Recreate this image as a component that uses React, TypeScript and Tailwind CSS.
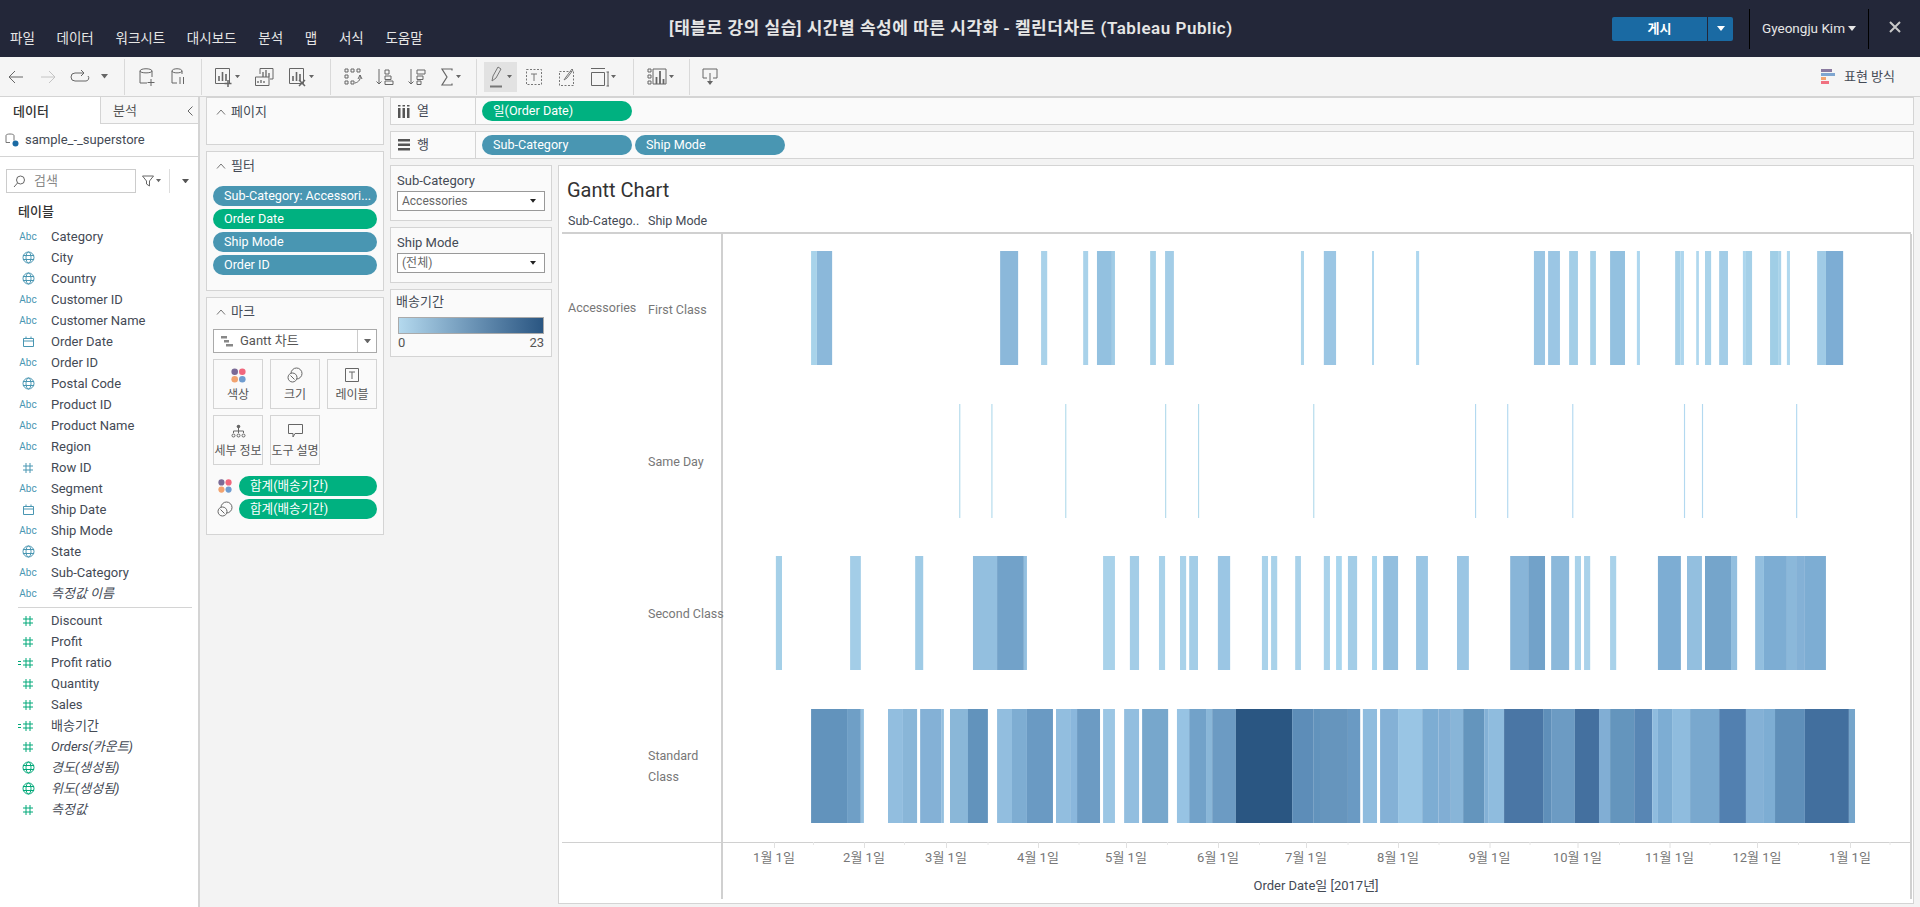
import type { ReactNode } from "react";

type Seg = [number, number, string];

// bar edges were read off crops starting at x=720 and x=1320, at 2.613 crop px per px
const PLOT_LEFT = 723;
const SCALE = 2.613;
const toX = (crop: number, v: number) => crop + v / SCALE - PLOT_LEFT;

const firstClass: [number, Seg[]][] = [
  [720, [
    [238, 253, "#a8d3ea"], [253, 293, "#8bb8da"], [732, 779, "#8bb8da"], [839, 855, "#a9d2ea"],
    [949, 962, "#a9d2ea"], [985, 1024, "#93c1e0"], [1024, 1032, "#a0cce6"], [1124, 1139, "#a5d0e8"],
    [1163, 1186, "#a3cde7"], [1518, 1526, "#aed6ec"],
  ]],
  [1320, [
    [10, 42, "#9bc6e4"], [136, 141, "#aed7ef"], [251, 259, "#aed7ef"], [559, 588, "#9bc6e4"],
    [596, 627, "#9bc6e4"], [651, 674, "#a3cee7"], [706, 721, "#a5d0e8"], [758, 797, "#93c1e0"],
    [828, 836, "#aed7ef"], [928, 942, "#a5d0e8"], [942, 951, "#add6ee"], [983, 990, "#b0d8ee"],
    [1006, 1022, "#a9d3ea"], [1043, 1066, "#a3cde7"], [1105, 1113, "#add6ee"], [1113, 1129, "#a5d0e8"],
    [1176, 1197, "#a0cee6"], [1197, 1205, "#a9d3ea"], [1220, 1228, "#b0d8ee"], [1299, 1322, "#a0cbe6"],
    [1322, 1367, "#7dadd4"],
  ]],
];

const sameDay: [number, Seg[]][] = [
  [720, [626, 710, 903, 1164, 1250, 1551].map((v): Seg => [v - 1, v + 2, "#b3dbec"])],
  [1320, [406, 490, 660, 952, 999, 1245].map((v): Seg => [v - 1, v + 2, "#b3d9f0"])],
];

const secondClass: [number, Seg[]][] = [
  [720, [
    [146, 162, "#a5d0e8"], [340, 368, "#a3cde7"], [510, 531, "#9fcbe6"], [661, 724, "#93bfdf"],
    [724, 794, "#72a2c9"], [794, 802, "#93bfdf"], [1001, 1032, "#a9d2ea"], [1071, 1095, "#a3cde7"],
    [1147, 1163, "#a9d2ea"], [1202, 1218, "#a9d2ea"], [1226, 1249, "#a3cde7"], [1301, 1333, "#9bc6e4"],
    [1416, 1432, "#a9d2ea"], [1440, 1456, "#a9d2ea"], [1503, 1518, "#a9d2ea"],
  ]],
  [1320, [
    [10, 26, "#a9d2ea"], [42, 57, "#a9d6ee"], [73, 97, "#a3cde7"], [136, 149, "#a9d6ee"],
    [165, 204, "#93bfdf"], [251, 282, "#9bc6e4"], [358, 389, "#9bc6e4"], [497, 544, "#88b5d8"],
    [544, 588, "#72a2c9"], [604, 651, "#8bb8da"], [666, 682, "#a9d2ea"], [690, 706, "#a9d2ea"],
    [758, 774, "#a9d2ea"], [883, 943, "#7dadd3"], [959, 998, "#93bfdf"], [1006, 1074, "#75a5cb"],
    [1074, 1090, "#93bfdf"], [1137, 1160, "#93bfdf"], [1160, 1220, "#7dadd3"], [1220, 1244, "#8bb8da"],
    [1244, 1267, "#84b1d6"], [1267, 1322, "#7dadd3"],
  ]],
];

const standardClass: [number, Seg[]][] = [
  [720, [
    [238, 332, "#6293bc"], [332, 368, "#6f9fc6"], [368, 376, "#93bfdf"], [439, 478, "#92bedf"],
    [478, 515, "#89b6d8"], [523, 578, "#84b1d6"], [578, 585, "#93bfdf"], [601, 648, "#8ab7d8"],
    [648, 700, "#6293bc"], [724, 763, "#92bedf"], [763, 802, "#7eadd2"], [802, 870, "#6a9ac3"],
    [878, 917, "#92bedf"], [917, 933, "#8ab7dc"], [933, 993, "#6c9bc3"], [1001, 1032, "#9bc6e4"],
    [1056, 1095, "#92bedf"], [1103, 1171, "#77a7cc"], [1194, 1226, "#97c3e3"], [1226, 1270, "#72a2c9"],
    [1270, 1286, "#8ab7d8"], [1286, 1348, "#6c9bc3"], [1348, 1495, "#2a5682"], [1495, 1550, "#5d8db8"],
    [1550, 1568, "#6293bc"],
  ]],
  [1320, [
    [0, 73, "#6695bd"], [73, 105, "#6a9ac3"], [112, 149, "#8fbcde"], [157, 204, "#84b1d6"],
    [204, 267, "#99c5e4"], [267, 310, "#7dadd3"], [310, 342, "#81aed4"], [342, 374, "#88b5d8"],
    [374, 429, "#6495bd"], [429, 441, "#84b1d6"], [441, 481, "#8fbcde"], [481, 583, "#4a76a5"],
    [583, 604, "#5f8fb9"], [604, 666, "#6c9bc3"], [666, 729, "#44709f"], [729, 758, "#81aed4"],
    [758, 821, "#6495bd"], [821, 868, "#5886b4"], [868, 883, "#8fbcde"], [883, 920, "#7dadd3"],
    [920, 967, "#8fbcde"], [967, 1043, "#79a8ce"], [1043, 1113, "#5280b0"], [1113, 1160, "#84b1d6"],
    [1160, 1189, "#7dadd3"], [1189, 1267, "#5f8fb9"], [1267, 1382, "#426f9e"], [1382, 1398, "#75a5cb"],
  ]],
];

const plotRows = [
  { top: 17, data: firstClass },
  { top: 170, data: sameDay },
  { top: 322, data: secondClass },
  { top: 475, data: standardClass },
];

const months = [
  [774, "1월 1일"], [864, "2월 1일"], [946, "3월 1일"], [1038, "4월 1일"], [1126, "5월 1일"],
  [1218, "6월 1일"], [1306, "7월 1일"], [1398, "8월 1일"], [1489.5, "9월 1일"], [1577.5, "10월 1일"],
  [1669.5, "11월 1일"], [1757, "12월 1일"], [1850, "1월 1일"],
] as [number, string][];

const minorTicks = [813, 904, 987.5, 1078.5, 1167, 1259, 1347.5, 1438.5, 1529.5, 1619, 1709.5, 1798, 1889.5];

type FieldKind = "abc" | "date" | "geo" | "num" | "numCalc" | "geoM";

const dimensions: [FieldKind, string, boolean?][] = [
  ["abc", "Category"], ["geo", "City"], ["geo", "Country"], ["abc", "Customer ID"], ["abc", "Customer Name"],
  ["date", "Order Date"], ["abc", "Order ID"], ["geo", "Postal Code"], ["abc", "Product ID"], ["abc", "Product Name"],
  ["abc", "Region"], ["num", "Row ID"], ["abc", "Segment"], ["date", "Ship Date"], ["abc", "Ship Mode"],
  ["geo", "State"], ["abc", "Sub-Category"], ["abc", "측정값 이름", true],
];

const measures: [FieldKind, string, boolean?][] = [
  ["numCalc", "Discount"], ["numCalc", "Profit"], ["numCalc", "Profit ratio"], ["numCalc", "Quantity"], ["numCalc", "Sales"],
  ["numCalc", "배송기간"], ["numCalc", "Orders(카운트)", true], ["geoM", "경도(생성됨)", true], ["geoM", "위도(생성됨)", true], ["numCalc", "측정값", true],
];

function Globe({ color }: { color: string }) {
  return (
    <svg width="13" height="13" viewBox="0 0 13 13" fill="none" stroke={color} strokeWidth="1">
      <circle cx="6.5" cy="6.5" r="5.5" />
      <ellipse cx="6.5" cy="6.5" rx="2.5" ry="5.5" />
      <path d="M1 4.5h11M1 8.5h11" />
    </svg>
  );
}

function Hash({ color }: { color: string }) {
  return (
    <svg width="12" height="12" viewBox="0 0 12 12" fill="none" stroke={color} strokeWidth="1">
      <path d="M4 1v10M8 1v10M1 4h10M1 8h10" />
    </svg>
  );
}

function FieldIcon({ kind, index }: { kind: FieldKind; index: number }) {
  if (kind === "abc") return <span className="text-[10px] leading-none text-[#4996b2]">Abc</span>;
  if (kind === "geo") return <Globe color="#4996b2" />;
  if (kind === "geoM") return <Globe color="#00a878" />;
  if (kind === "date") {
    return (
      <svg width="11" height="11" viewBox="0 0 11 11" fill="none" stroke="#4996b2" strokeWidth="1">
        <path d="M.5 2.5h10v8H.5zM.5 5h10M3 .5v2M8 .5v2" />
      </svg>
    );
  }
  if (kind === "num") return <Hash color="#4996b2" />;
  return (
    <span className="relative flex">
      {(index === 2 || index === 5) && <span className="absolute right-[13px] top-1 h-1 w-[3px] border-y border-[#00a878]" />}
      <Hash color="#00a878" />
    </span>
  );
}

function FieldRow({ kind, name, italic, index }: { kind: FieldKind; name: string; italic?: boolean; index: number }) {
  return (
    <div className="flex h-[21px] items-center">
      <span className="flex w-[51px] shrink-0 justify-center pl-[5px]">
        <FieldIcon kind={kind} index={index} />
      </span>
      <span className={`text-[13px] text-[#444a55] ${italic ? "italic" : ""}`}>{name}</span>
    </div>
  );
}

function Caret({ color = "#666", size = 8 }: { color?: string; size?: number }) {
  return (
    <svg width={size} height={(size * 5) / 8} viewBox="0 0 8 5" fill={color}>
      <path d="M0 0h8L4 5z" />
    </svg>
  );
}

function Pill({ green, children, className = "" }: { green?: boolean; children: ReactNode; className?: string }) {
  return (
    <div className={`flex h-5 items-center rounded-[10px] pl-[11px] text-[12.6px] text-white whitespace-nowrap overflow-hidden ${green ? "bg-[#00b180]" : "bg-[#4996b2]"} ${className}`}>
      {children}
    </div>
  );
}

function CardTitle({ children }: { children: ReactNode }) {
  return (
    <div className="flex items-center gap-[5px] pl-[9px] text-[13px] leading-5 text-[#444a55]">
      <svg width="10" height="6" viewBox="0 0 10 6" fill="none" stroke="#777" strokeWidth="1">
        <path d="M1 5.5L5 1l4 4.5" />
      </svg>
      {children}
    </div>
  );
}

function Dots({ size = 15 }: { size?: number }) {
  return (
    <svg width={size} height={size} viewBox="0 0 15 15">
      <circle cx="3.7" cy="3.7" r="3.3" fill="#7a6a96" />
      <circle cx="11.3" cy="3.7" r="3.3" fill="#f0667c" />
      <circle cx="3.7" cy="11.3" r="3.3" fill="#f2a36f" />
      <circle cx="11.3" cy="11.3" r="3.3" fill="#6f9ccf" />
    </svg>
  );
}

function SizeIcon() {
  return (
    <svg width="16" height="16" viewBox="0 0 16 16" fill="none" stroke="#666" strokeWidth="1">
      <circle cx="9.5" cy="6.5" r="5.5" />
      <circle cx="5.5" cy="10.5" r="4.5" fill="#fafafa" />
      <path d="M3.5 8.5l4 4" />
    </svg>
  );
}

function MarkButton({ icon, label }: { icon: ReactNode; label: string }) {
  return (
    <div className="flex h-[50px] w-[50px] flex-col items-center border border-[#d4d4d4] pt-[7px] text-[12px] whitespace-nowrap text-[#555]">
      <span className="flex h-[16px] items-center">{icon}</span>
      <span className="mt-[2px] leading-5">{label}</span>
    </div>
  );
}

function FilterCard({ title, value }: { title: string; value: string }) {
  return (
    <div className="h-[56px] border border-[#d4d4d4] bg-[#fafafa] px-[6px] pt-[5px]">
      <div className="text-[13px] leading-[19px] text-[#444a55]">{title}</div>
      <div className="mt-[1px] flex h-[20px] items-center justify-between border border-[#999] bg-white pl-1 pr-[8px] text-[12px] text-[#666]">
        {value}
        <Caret color="#222" size={6} />
      </div>
    </div>
  );
}

function Shelf({ icon, label, children }: { icon: ReactNode; label: string; children: ReactNode }) {
  return (
    <div className="flex h-[28px] border border-[#d4d4d4] bg-[#fafafa]">
      <div className="flex w-[85px] shrink-0 items-center gap-[7px] border-r border-[#d4d4d4] pl-[7px] text-[13px] text-[#444a55]">
        {icon}
        {label}
      </div>
      <div className="flex items-center gap-[3px] pl-[6px]">{children}</div>
    </div>
  );
}

function Tool({ children, className = "w-8" }: { children: ReactNode; className?: string }) {
  return <div className={`flex h-full shrink-0 items-center justify-center ${className}`}>{children}</div>;
}

function Sep({ className = "" }: { className?: string }) {
  return <div className={`h-[36px] w-px shrink-0 bg-[#d9d9d9] ${className}`} />;
}

function Icon({ children, w = 22, h = 22 }: { children: ReactNode; w?: number; h?: number }) {
  return (
    <svg width={w} height={h} viewBox={`0 0 ${w} ${h}`} fill="none" stroke="#666" strokeWidth="1">
      {children}
    </svg>
  );
}

function BarsGlyph() {
  return (
    <>
      <path d="M2.5 2.5h14v15h-14z" />
      <path d="M6 15V10M9.5 15V6M13 15v-7" strokeWidth="1.6" />
    </>
  );
}

function Toolbar() {
  return (
    <div className="flex h-[40px] items-center border-b border-[#d4d4d4] bg-[#f5f5f5]">
      <Tool>
        <Icon><path d="M18 11H4M10 5l-6 6 6 6" /></Icon>
      </Tool>
      <Tool>
        <Icon><g stroke="#c4c4c4"><path d="M4 11h14M12 5l6 6-6 6" /></g></Icon>
      </Tool>
      <Tool>
        <Icon><path d="M14 7H6a3 3 0 000 8h11a3 3 0 002-5M12 4l3 3-3 3" /></Icon>
      </Tool>
      <Tool className="w-4"><Caret size={7} /></Tool>
      <Sep className="ml-[12px]" />
      <Tool className="ml-[5px] w-8">
        <Icon><path d="M5 5v12h7M17 5v6M5 5c0-3 12-3 12 0 0 2.500-12 2.500-12 0zM16 13v7M12.500 16.500h7" /></Icon>
      </Tool>
      <Tool>
        <Icon><path d="M5 5v12h5M15 5v3M5 5c0-3 10-3 10 0 0 2.500-10 2.500-10 0zM13 11v7M16.500 11v7" /></Icon>
      </Tool>
      <Sep className="ml-[7px]" />
      <Tool className="ml-[8px] w-8">
        <Icon><BarsGlyph /><path d="M15 14v7M11.500 17.500h7" strokeWidth="1.500" /></Icon>
        <Caret size={5} />
      </Tool>
      <Tool className="ml-[6px] w-8">
        <Icon><path d="M7 8V2.500h13V13h-3M2.500 11H16v8.500H2.500z" /><path d="M10 11V6M13 11V4M16 11V7M5 17v-2M8 17v-3M11 17v-2" strokeWidth="1.300" /></Icon>
      </Tool>
      <Tool className="ml-[4px] w-8">
        <Icon><BarsGlyph /><path d="M12 14l6 6M18 14l-6 6" strokeWidth="1.500" /></Icon>
        <Caret size={5} />
      </Tool>
      <Sep className="ml-[14px]" />
      <Tool className="ml-[6px] w-8">
        <Icon><path d="M3 3h3v3H3zM9 3h3v3H9zM15 3h3v3h-3zM3 9h3v3H3zM3 15h3v3H3zM9 15h3v3H9zM18 9c1 4-1 7-5 8M16 13l2-4 2 4" /></Icon>
      </Tool>
      <Tool className="w-8">
        <Icon><path d="M5 3v15M2.500 15.500L5 18l2.500-2.500M11 4h4v4h-4zM11 10h6v3.500h-6zM11 15h8v3.500h-8z" /></Icon>
      </Tool>
      <Tool className="w-8">
        <Icon><path d="M5 3v15M2.500 15.500L5 18l2.500-2.500M11 4h8v4h-8zM11 10h6v3.500h-6zM11 15h4v3.500h-4z" /></Icon>
      </Tool>
      <Tool className="w-[34px]">
        <Icon w={14}><path d="M12 4.500V3H2l5 8-5 8h10v-1.500" strokeWidth="1.200" /></Icon>
        <span className="ml-[2px]"><Caret size={5} /></span>
      </Tool>
      <Sep className="ml-[9px]" />
      <div className="ml-[7px] flex h-[30px] w-[33px] items-center justify-center bg-[#e2e2e2]">
        <svg width="16" height="24" viewBox="0 0 16 24" fill="none" stroke="#777" strokeWidth="1">
          <path d="M3 16l1-5 5-9 3 2-5 9-4 3z" />
          <path d="M1 21.500h12" stroke="#777" strokeWidth="2" />
        </svg>
        <span className="ml-[2px]"><Caret size={5} /></span>
      </div>
      <Tool className="ml-[1px] w-[32px]">
        <svg width="16" height="16" viewBox="0 0 16 16" fill="none" stroke="#777" strokeWidth="1" strokeDasharray="2 1.500">
          <path d="M.5.5h15v15H.5z" />
          <path d="M5 5h6M8 5v7" strokeDasharray="none" />
        </svg>
      </Tool>
      <Tool className="ml-[1px] w-[32px]">
        <svg width="16" height="18" viewBox="0 0 16 18" fill="none" stroke="#777" strokeWidth="1">
          <path d="M.5 3.500h14v14H.5z" strokeDasharray="2 1.500" />
          <path d="M5 12l2-3 6-8 1 1-6 8z" />
        </svg>
      </Tool>
      <Tool className="ml-[2px] w-[36px]">
        <svg width="18" height="20" viewBox="0 0 18 20" fill="none" stroke="#666" strokeWidth="1">
          <path d="M.5 5.500h13v13H.5zM0 1.500h14M17 5v14M15.500 5h3M15.500 19h3" />
        </svg>
        <span className="ml-[2px]"><Caret size={5} /></span>
      </Tool>
      <Sep className="ml-[12px]" />
      <Tool className="ml-[7px] w-[38px]">
        <svg width="20" height="18" viewBox="0 0 20 18" fill="none" stroke="#666" strokeWidth="1">
          <path d="M1 1h3v3H1zM1 7h3v3H1zM1 13h3v3H1zM6 1h13v15H6z" />
          <path d="M9.500 16V9M13 16V3M16.500 16v-5" strokeWidth="1.800" />
        </svg>
        <span className="ml-[2px]"><Caret size={5} /></span>
      </Tool>
      <Sep className="ml-[10px]" />
      <Tool className="ml-[5px] w-[30px]">
        <svg width="16" height="18" viewBox="0 0 16 18" fill="none" stroke="#666" strokeWidth="1">
          <path d="M5 10H1V1h14v9h-4M8 5v11" />
          <path d="M5 13h6l-3 4z" fill="#666" stroke="none" />
        </svg>
      </Tool>
      <div className="ml-auto mr-[25px] flex items-center gap-[9px] text-[13px] text-[#444a55]">
        <span className="flex flex-col gap-px">
          <span className="h-[3px] w-[11px] bg-[#8a7aa0]" />
          <span className="h-[3px] w-[14px] bg-[#7fa6d0]" />
          <span className="h-[3px] w-[5px] bg-[#f2a36f]" />
          <span className="h-[3px] w-[8px] bg-[#f0707f]" />
        </span>
        표현 방식
      </div>
    </div>
  );
}

function TopBar() {
  return (
    <header className="relative flex h-[57px] items-end bg-[#232739] text-[#e6e6e6]">
      <nav className="flex gap-[21.7px] pb-[9px] pl-[10px] text-[13.5px] leading-5">
        {["파일", "데이터", "워크시트", "대시보드", "분석", "맵", "서식", "도움말"].map((m) => (
          <span key={m}>{m}</span>
        ))}
      </nav>
      <h1 className="absolute left-[669px] top-[17px] text-[17px] leading-[22px] font-semibold tracking-[0.52px] whitespace-nowrap">
        [태블로 강의 실습] 시간별 속성에 따른 시각화 - 켈린더차트 (Tableau Public)
      </h1>
      <div className="ml-auto flex h-full items-center self-start">
        <div className="flex h-6 w-[121px] overflow-hidden rounded-[2px] bg-[#1a6aa3] text-white">
          <span className="flex w-[96px] items-center justify-center border-r border-[#232739] text-[13px] font-semibold">게시</span>
          <span className="flex flex-1 items-center justify-center"><Caret color="#fff" /></span>
        </div>
        <div className="ml-4 h-10 w-px bg-black" />
        <div className="flex w-[118px] items-center justify-center gap-[3px] text-[13.5px]">
          Gyeongju Kim <Caret color="#e6e6e6" />
        </div>
        <div className="h-10 w-px bg-black" />
        <div className="flex w-[51px] justify-center pb-1">
          <svg width="12" height="12" viewBox="0 0 12 12" stroke="#c8c8c8" strokeWidth="2">
            <path d="M1 1l10 10M11 1L1 11" />
          </svg>
        </div>
      </div>
    </header>
  );
}

function DataPane() {
  return (
    <aside className="flex w-[200px] shrink-0 flex-col border-r-2 border-[#d4d4d4] bg-white">
      <div className="flex h-[27px] shrink-0 text-[13px]">
        <div className="flex w-[100px] items-center pt-[2px] pl-[13px] font-medium text-[#333]">데이터</div>
        <div className="flex flex-1 items-center justify-between border-b border-l border-[#d4d4d4] bg-[#f7f7f7] pt-[2px] pl-[12px] pr-[5px] text-[#555]">
          분석
          <svg width="6" height="10" viewBox="0 0 6 10" fill="none" stroke="#666" strokeWidth="1">
            <path d="M5.500 .5L1 5l4.500 4.500" />
          </svg>
        </div>
      </div>
      <div className="flex h-[33px] shrink-0 items-center gap-[6px] border-b border-[#d4d4d4] pl-[5px] text-[13px] text-[#444a55]">
        <svg width="14" height="14" viewBox="0 0 14 14" fill="none" stroke="#777" strokeWidth="1">
          <path d="M1 2.500c0-2 8-2 8 0v5M1 2.500v7h4" />
          <circle cx="10.500" cy="10.500" r="3" fill="#1a6aa3" stroke="none" />
        </svg>
        sample_-_superstore
      </div>
      <div className="mt-[12px] flex h-[24px] shrink-0 items-center pl-[6px]">
        <div className="flex h-full w-[130px] items-center gap-[8px] border border-[#ccc] pl-[6px] text-[13px] text-[#888]">
          <svg width="13" height="13" viewBox="0 0 13 13" fill="none" stroke="#666" strokeWidth="1">
            <circle cx="7.500" cy="5" r="4" />
            <path d="M4.500 8L1 12" />
          </svg>
          검색
        </div>
        <svg className="ml-[6px]" width="12" height="12" viewBox="0 0 12 12" fill="none" stroke="#666" strokeWidth="1">
          <path d="M.5 1h11L7.500 6v5l-3-2V6z" />
        </svg>
        <span className="ml-[2px]"><Caret size={5} /></span>
        <div className="ml-[8px] h-full w-px bg-[#ddd]" />
        <span className="ml-[12px]"><Caret color="#555" size={7} /></span>
      </div>
      <div className="mt-[9px] pl-[18px] text-[13px] leading-5 font-medium text-[#333]">테이블</div>
      <div className="mt-[4px] ml-0">
        {dimensions.map(([kind, name, italic], i) => (
          <FieldRow key={name} kind={kind} name={name} italic={italic} index={i} />
        ))}
      </div>
      <div className="mt-[3px] mr-[6px] mb-[2px] ml-[18px] h-px bg-[#d4d4d4]" />
      <div>
        {measures.map(([kind, name, italic], i) => (
          <FieldRow key={name} kind={kind} name={name} italic={italic} index={i} />
        ))}
      </div>
    </aside>
  );
}

function CardsColumn() {
  return (
    <div className="ml-[6px] flex w-[178px] shrink-0 flex-col gap-[6px]">
      <div className="h-[48px] border border-[#d4d4d4] bg-[#fafafa] pt-[4px]">
        <CardTitle>페이지</CardTitle>
      </div>
      <div className="h-[140px] border border-[#d4d4d4] bg-[#fafafa] pt-[4px]">
        <CardTitle>필터</CardTitle>
        <div className="mt-[10px] flex flex-col gap-[3px] px-[6px]">
          <Pill>Sub-Category: Accessori...</Pill>
          <Pill green>Order Date</Pill>
          <Pill>Ship Mode</Pill>
          <Pill>Order ID</Pill>
        </div>
      </div>
      <div className="h-[238px] border border-[#d4d4d4] bg-[#fafafa] px-[6px] pt-[4px]">
        <div className="-mx-[6px]"><CardTitle>마크</CardTitle></div>
        <div className="mt-[7px] flex h-[24px] items-center border border-[#aaa] bg-white text-[13px] text-[#555]">
          <span className="flex flex-1 items-center gap-[7px] pl-[7px]">
            <svg width="12" height="12" viewBox="0 0 12 12" fill="#888">
              <path d="M0 1h6v2.500H0zM3 5h5v2.500H3zM5 9h7v2.500H5z" />
            </svg>
            Gantt 차트
          </span>
          <span className="flex h-full w-[19px] items-center justify-center border-l border-[#ccc]"><Caret size={7} /></span>
        </div>
        <div className="mt-[6px] grid grid-cols-3 gap-[6px] gap-x-[7px]">
          <MarkButton icon={<Dots />} label="색상" />
          <MarkButton icon={<SizeIcon />} label="크기" />
          <MarkButton
            icon={
              <svg width="14" height="14" viewBox="0 0 14 14" fill="none" stroke="#666" strokeWidth="1">
                <path d="M.5.5h13v13H.5zM4 4h6M7 4v7" />
              </svg>
            }
            label="레이블"
          />
          <MarkButton
            icon={
              <svg width="15" height="15" viewBox="0 0 15 15" fill="none" stroke="#666" strokeWidth="1">
                <circle cx="7.500" cy="2.500" r="1.800" fill="#666" stroke="none" />
                <path d="M7.500 4v5M2.500 9V7h10v2" />
                <circle cx="2.500" cy="11.500" r="1.500" />
                <circle cx="7.500" cy="11.500" r="1.500" />
                <circle cx="12.500" cy="11.500" r="1.500" />
              </svg>
            }
            label="세부 정보"
          />
          <MarkButton
            icon={
              <svg width="15" height="14" viewBox="0 0 15 14" fill="none" stroke="#666" strokeWidth="1">
                <path d="M.5.5h14v9H7l-2 3.500v-3.500H.5z" />
              </svg>
            }
            label="도구 설명"
          />
        </div>
        <div className="mt-[11px] flex flex-col gap-[3px]">
          <div className="flex items-center">
            <span className="flex w-[26px] justify-center pr-[3px]"><Dots size={14} /></span>
            <Pill green className="flex-1">합계(배송기간)</Pill>
          </div>
          <div className="flex items-center">
            <span className="flex w-[26px] justify-center pr-[3px]"><SizeIcon /></span>
            <Pill green className="flex-1">합계(배송기간)</Pill>
          </div>
        </div>
      </div>
    </div>
  );
}

function Plot() {
  return (
    <svg width="1187" height="665" viewBox="0 0 1187 665" className="block shrink-0">
      {plotRows.map((row) =>
        row.data.map(([crop, segs]) =>
          segs.map(([a, b, color]) => (
            <rect key={`${row.top}-${crop}-${a}`} x={toX(crop, a)} y={row.top} width={(b - a) / SCALE} height={114} fill={color} />
          )),
        ),
      )}
      <path d="M0 608.500H1187" stroke="#d0d0d0" />
      {months.map(([x]) => (
        <path key={x} d={`M${x - PLOT_LEFT + 0.5} 608v6`} stroke="#e0e0e0" />
      ))}
      {minorTicks.map((x) => (
        <path key={x} d={`M${x - PLOT_LEFT + 0.5} 608v3`} stroke="#e8e8e8" />
      ))}
      {months.map(([x, label]) => (
        <text key={`${x}-l`} x={x - PLOT_LEFT} y={628} textAnchor="middle" fontSize="13" fill="#777">
          {label}
        </text>
      ))}
      <text x={593} y={656} textAnchor="middle" fontSize="13" fill="#444a55">
        Order Date일 [2017년]
      </text>
    </svg>
  );
}

function Sheet() {
  return (
    <section className="flex h-[739px] w-[1356px] shrink-0 flex-col border border-[#d4d4d4] bg-white pl-[3px]">
      <div className="h-[43px] shrink-0 pt-[12px] pl-[5px] text-[20px] leading-6 font-normal text-[#333]">Gantt Chart</div>
      <div className="mr-[2px] flex h-[25px] shrink-0 items-end border-b-2 border-[#d0d0d0] pb-[1px] text-[12.5px] text-[#444a55]">
        <span className="w-[86px] pl-[6px]">Sub-Catego..</span>
        <span>Ship Mode</span>
      </div>
      <div className="flex h-[665px] shrink-0">
        <div className="flex w-[161px] shrink-0 flex-col border-r-2 border-[#d0d0d0]">
          <div className="flex h-[609px] border-b border-[#d0d0d0] text-[12.5px] text-[#777]">
            <div className="w-[86px] shrink-0 pt-[65px] pl-[6px]">Accessories</div>
            <div className="flex flex-1 flex-col whitespace-nowrap">
              <div className="flex h-[152px] items-center">First Class</div>
              <div className="flex h-[152px] items-center">Same Day</div>
              <div className="flex h-[152px] items-center">Second Class</div>
              <div className="flex h-[152px] items-center leading-[21px]">Standard<br />Class</div>
            </div>
          </div>
        </div>
        <div className="border-r-2 border-[#d0d0d0]">
          <Plot />
        </div>
      </div>
    </section>
  );
}

export default function App() {
  return (
    <div className="flex h-[907px] w-[1920px] flex-col overflow-hidden bg-[#f3f3f3] font-['Roboto','Noto_Sans_CJK_KR',sans-serif]">
      <TopBar />
      <Toolbar />
      <div className="flex min-h-0 flex-1">
        <DataPane />
        <CardsColumn />
        <div className="ml-[6px] flex w-[1524px] shrink-0 flex-col gap-[6px]">
          <Shelf
            label="열"
            icon={
              <svg width="12" height="13" viewBox="0 0 12 13" fill="#555">
                <path d="M0 3h2.500v10H0zM4.500 3H7v10H4.500zM9 3h2.500v10H9zM0 0h2.500v1.500H0zM4.500 0H7v1.500H4.500zM9 0h2.500v1.500H9z" />
              </svg>
            }
          >
            <Pill green className="w-[150px]">일(Order Date)</Pill>
          </Shelf>
          <Shelf
            label="행"
            icon={
              <svg width="12" height="12" viewBox="0 0 12 12" fill="#555">
                <path d="M0 0h12v2.500H0zM0 4.500h12V7H0zM0 9h12v2.500H0z" />
              </svg>
            }
          >
            <Pill className="w-[150px]">Sub-Category</Pill>
            <Pill className="w-[150px]">Ship Mode</Pill>
          </Shelf>
          <div className="flex gap-[6px]">
            <div className="flex w-[162px] shrink-0 flex-col gap-[6px]">
              <FilterCard title="Sub-Category" value="Accessories" />
              <FilterCard title="Ship Mode" value="(전체)" />
              <div className="h-[68px] border border-[#d4d4d4] bg-[#fafafa] px-[7px] pt-[2px]">
                <div className="-ml-[2px] text-[13px] leading-5 text-[#444a55]">배송기간</div>
                <div className="mt-[5px] h-[17px] border border-[#aaa] bg-gradient-to-r from-[#b4d9ee] to-[#2a5682]" />
                <div className="flex justify-between text-[13px] leading-[18px] text-[#555]">
                  <span>0</span>
                  <span>23</span>
                </div>
              </div>
            </div>
            <Sheet />
          </div>
        </div>
      </div>
    </div>
  );
}
